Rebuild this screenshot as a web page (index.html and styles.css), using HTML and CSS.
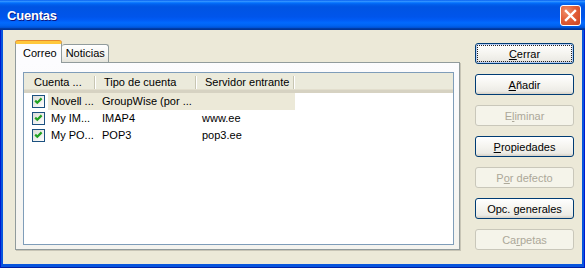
FILE: index.html
```html
<!DOCTYPE html>
<html lang="es">
<head>
    <meta charset="UTF-8">
    <title>Cuentas</title>
    <link rel="stylesheet" href="styles.css">
</head>
<body>
<div class="window">
    <div class="titlebar">
        <span class="title">Cuentas</span>
        <span class="close">
            <svg width="13" height="13" viewBox="0 0 13 13"><path d="M2 2L11 11M11 2L2 11" stroke="#fff" stroke-width="2.4" stroke-linecap="square"/></svg>
        </span>
    </div>
    <div class="client">
        <!-- tab control with the account list -->
        <div class="tabs-area">
            <div class="tabs">
                <div class="tab active">Correo</div>
                <div class="tab">Noticias</div>
            </div>
            <div class="panel">
                <div class="listview">
                    <div class="lv-header">
                        <div class="hcell h1">Cuenta ...</div>
                        <div class="hcell h2">Tipo de cuenta</div>
                        <div class="hcell h3">Servidor entrante</div>
                    </div>
                    <div class="row sel">
                        <span class="check"><svg width="11" height="11" viewBox="0 0 11 11"><path d="M2.2 4.6L4.3 6.7L8.6 2.4" fill="none" stroke="#21A121" stroke-width="2.2"/></svg></span>
                        <div class="cells">
                            <span class="c1">Novell ...</span>
                            <span class="c2">GroupWise (por ...</span>
                            <span class="c3"></span>
                        </div>
                    </div>
                    <div class="row">
                        <span class="check"><svg width="11" height="11" viewBox="0 0 11 11"><path d="M2.2 4.6L4.3 6.7L8.6 2.4" fill="none" stroke="#21A121" stroke-width="2.2"/></svg></span>
                        <div class="cells">
                            <span class="c1">My IM...</span>
                            <span class="c2">IMAP4</span>
                            <span class="c3">www.ee</span>
                        </div>
                    </div>
                    <div class="row">
                        <span class="check"><svg width="11" height="11" viewBox="0 0 11 11"><path d="M2.2 4.6L4.3 6.7L8.6 2.4" fill="none" stroke="#21A121" stroke-width="2.2"/></svg></span>
                        <div class="cells">
                            <span class="c1">My PO...</span>
                            <span class="c2">POP3</span>
                            <span class="c3">pop3.ee</span>
                        </div>
                    </div>
                </div>
            </div>
        </div>

        <div class="buttons">
            <button class="btn default"><u>C</u>errar</button>
            <button class="btn"><u>A</u>ñadir</button>
            <button class="btn" disabled>E<u>l</u>iminar</button>
            <button class="btn"><u>P</u>ropiedades</button>
            <button class="btn" disabled>P<u>o</u>r defecto</button>
            <button class="btn">Opc. <u>g</u>enerales</button>
            <button class="btn" disabled>Ca<u>r</u>petas</button>
        </div>
    </div>
</div>
</body>
</html>
```
FILE: styles.css
```css
body {
    margin: 0;
    background: #ECE9D8;
    font-family: "Liberation Sans", Arial, sans-serif;
    font-size: 11px;
    color: #000;
    overflow: hidden;
}

.window {
    width: 585px;
    height: 268px;
    display: flex;
    flex-direction: column;
    background: #0855DD;
    box-shadow: inset 1px 0 0 #0019CF, inset -1px 0 0 #0019CF, inset 0 -1px 0 #001EA0;
}

.titlebar {
    height: 30px;
    flex: none;
    display: flex;
    align-items: center;
    justify-content: space-between;
    padding: 0 4px 0 7px;
    background: linear-gradient(to bottom, #0058EE 0%, #3593FF 4%, #288EFF 6%, #127DFF 8%, #036FFC 10%, #0262EE 14%, #0057E5 20%, #0054E3 24%, #0055EB 56%, #005BF5 66%, #026AFE 76%, #0062EF 86%, #0052D6 92%, #0040AB 94%, #003092 100%);
}

.title {
    color: #fff;
    font-weight: bold;
    font-size: 13px;
    text-shadow: 1px 1px 0 #0A1883;
    letter-spacing: -0.2px;
}

.close {
    width: 21px;
    height: 21px;
    box-sizing: border-box;
    border: 1px solid #fff;
    border-radius: 3px;
    background: radial-gradient(circle at 30% 30%, #F0906C 0%, #E35F38 45%, #CC4420 100%);
    display: flex;
    align-items: center;
    justify-content: center;
}

.client {
    flex: 1;
    margin: 0 3px 4px 3px;
    background: #ECE9D8;
    display: flex;
    padding: 11px 0 0 12px;
}

/* tab control */
.tabs-area {
    width: 446px;
}

.tabs {
    display: flex;
    align-items: flex-end;
    height: 21px;
    position: relative;
    z-index: 1;
}

.tab {
    box-sizing: border-box;
    height: 18px;
    padding: 0 3px 0 4px;
    line-height: 17px;
    border: 1px solid #919B9C;
    border-bottom: none;
    border-left: none;
    border-radius: 3px 3px 0 0;
    background: linear-gradient(#FFFFFF, #F3F3EF 60%, #E4E3DA);
}

.tab.active {
    height: 22px;
    margin-bottom: -1px;
    padding: 0 4px 0 7px;
    line-height: 18px;
    border-left: 1px solid #919B9C;
    border-top: 3px solid #FFC83C;
    box-shadow: 0 -1px 0 #E68B2C;
    background: #FCFCFE;
}

.panel {
    box-sizing: border-box;
    height: 188px;
    width: 445px;
    border: 1px solid #919B9C;
    box-shadow: 1px 1px 0 #C8C5B6;
    background: linear-gradient(#FCFCFE, #F4F3EE);
    padding: 9px 0 0 7px;
}

.listview {
    box-sizing: border-box;
    width: 431px;
    height: 173px;
    border: 1px solid #7F9DB9;
    background: #fff;
}

.lv-header {
    box-sizing: border-box;
    height: 20px;
    display: flex;
    background: #EBEADB;
    border-bottom: 3px solid #D6D2C2;
    box-shadow: inset 0 -1px 0 #E2DECD;
}

.hcell {
    box-sizing: border-box;
    height: 13px;
    margin-top: 3px;
    line-height: 13px;
    border-right: 1px solid #C7C5B2;
    box-shadow: 1px 0 0 #fff;
    white-space: nowrap;
    overflow: hidden;
}

.h1 { width: 71px; padding-left: 10px; }
.h2 { width: 101px; padding-left: 9px; }
.h3 { width: 98px; padding-left: 9px; }

.row {
    height: 17px;
    display: flex;
    align-items: center;
    padding-left: 8px;
}

.check {
    box-sizing: border-box;
    width: 13px;
    height: 13px;
    border: 1px solid #1C5180;
    background: linear-gradient(135deg, #DCDCD7, #FFFFFF);
    display: flex;
}

.cells {
    display: flex;
    height: 17px;
    line-height: 17px;
    margin-left: 3px;
}

.row.sel .cells {
    background: #ECE9D8;
}

.c1, .c2, .c3 {
    box-sizing: border-box;
    white-space: nowrap;
    overflow: hidden;
}

.c1 { width: 46px; padding-left: 3px; }
.c2 { width: 101px; padding-left: 8px; }
.c3 { width: 100px; padding-left: 7px; }

/* right hand buttons */
.buttons {
    margin-left: 14px;
    padding-top: 2px;
    display: flex;
    flex-direction: column;
    gap: 10px;
}

.btn {
    box-sizing: border-box;
    width: 99px;
    height: 21px;
    padding: 0;
    font-family: inherit;
    font-size: 11px;
    color: #000;
    border: 1px solid #003C74;
    border-radius: 3px;
    background: linear-gradient(#FFFFFF, #F4F3EE 55%, #ECEBE6 85%, #D6D0C5);
}

.btn.default {
    box-shadow: inset 0 0 0 1px #B8CDF4;
    outline: 1px dotted #222;
    outline-offset: -3px;
}

.btn:disabled {
    color: #ACA899;
    border-color: #C9C7BA;
    background: #F5F4EA;
}
```
